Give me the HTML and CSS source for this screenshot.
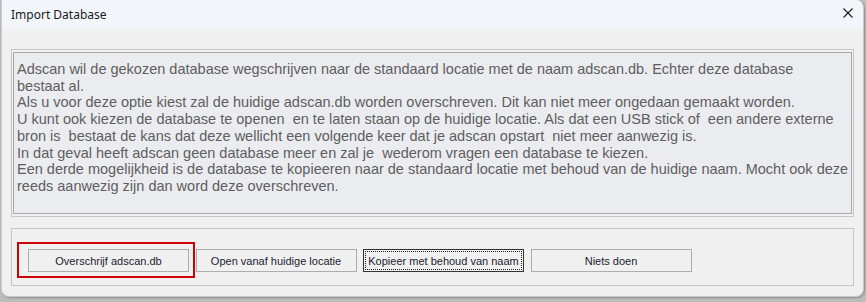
FILE: index.html
```html
<!DOCTYPE html>
<html lang="nl">
<head>
    <meta charset="UTF-8">
    <title>Import Database</title>
    <link rel="stylesheet" href="styles.css">
</head>
<body>
    <div class="window">
        <div class="titlebar">
            <span class="title">Import Database</span>
            <span class="close">
                <svg width="10" height="10" viewBox="0 0 10 10">
                    <path d="M0.5 0.5 L9.5 9.5 M9.5 0.5 L0.5 9.5" stroke="#1b1b1b" stroke-width="1.1" fill="none"/>
                </svg>
            </span>
        </div>

        <div class="body">
            <div class="group message-group">
                <div class="memo">
                    <p>Adscan wil de gekozen database wegschrijven naar de standaard locatie met de naam adscan.db. Echter deze database<br>bestaat al.<br>Als u voor deze optie kiest zal de huidige adscan.db worden overschreven. Dit kan niet meer ongedaan gemaakt worden.<br>U kunt ook kiezen de database te openen  en te laten staan op de huidige locatie. Als dat een USB stick of  een andere externe<br>bron is  bestaat de kans dat deze wellicht een volgende keer dat je adscan opstart  niet meer aanwezig is.<br>In dat geval heeft adscan geen database meer en zal je  wederom vragen een database te kiezen.<br>Een derde mogelijkheid is de database te kopieeren naar de standaard locatie met behoud van de huidige naam. Mocht ook deze<br>reeds aanwezig zijn dan word deze overschreven.</p>
                </div>
            </div>

            <div class="group button-group">
                <div class="highlight"></div>
                <button class="btn">Overschrijf adscan.db</button>
                <button class="btn">Open vanaf huidige locatie</button>
                <button class="btn focused"><span>Kopieer met behoud van naam</span></button>
                <button class="btn">Niets doen</button>
            </div>
        </div>
    </div>
</body>
</html>
```

FILE: styles.css
```css
* {
    margin: 0;
    padding: 0;
    box-sizing: border-box;
}

body {
    background: #bdbdbd;
    width: 866px;
    height: 302px;
    overflow: hidden;
    font-family: "Liberation Sans", Arial, sans-serif;
}

.window {
    margin-left: 1px;
    width: 863px;
    height: 297px;
    background: #f0f0f0;
    border: 1px solid #c9c9c9;
    border-top: none;
    border-radius: 0 8px 8px 8px;
    overflow: hidden;
    box-shadow: 1px 1px 2px rgba(0, 0, 0, 0.25);
}

.titlebar {
    height: 29px;
    background: #f2f6fb;
    display: flex;
    align-items: center;
    justify-content: space-between;
    padding: 0 9px 0 9px;
}

.title {
    font-family: "Noto Sans", sans-serif;
    font-size: 12px;
    color: #1a1a1a;
    padding-bottom: 1px;
}

.close {
    display: flex;
    margin-right: 1px;
    padding-bottom: 3px;
}

.body {
    padding: 20px 0 0 9px;
}

.group {
    border: 1px solid #c6c6c6;
    width: 843px;
}

.message-group {
    height: 168px;
    padding: 2px 1px;
}

.memo {
    height: 162px;
    border: 1px solid #a9a9a9;
    background: #ebecf0;
    padding: 8px 3px;
    overflow: hidden;
}

.memo p {
    font-size: 14.5px;
    line-height: 16.7px;
    color: #5e5e5e;
    white-space: pre;
}

.button-group {
    margin-top: 11px;
    height: 58px;
    padding: 20px 0 0 16px;
    display: flex;
    align-items: flex-start;
    gap: 6.5px;
    position: relative;
}

.btn {
    width: 161px;
    height: 23px;
    background: #f0f0f0;
    border: 1px solid #adadad;
    font-family: "Liberation Sans", Arial, sans-serif;
    font-size: 11px;
    color: #1c1c30;
    display: flex;
    align-items: center;
    justify-content: center;
}

.btn.focused {
    border-color: #333;
    padding: 1px;
}

.btn.focused span {
    flex: 1;
    height: 100%;
    border: 1px dotted #222;
    display: flex;
    align-items: center;
    justify-content: center;
}

.highlight {
    position: absolute;
    left: 5px;
    top: 13px;
    width: 178px;
    height: 36px;
    border: 2px solid #cc0000;
}
```
